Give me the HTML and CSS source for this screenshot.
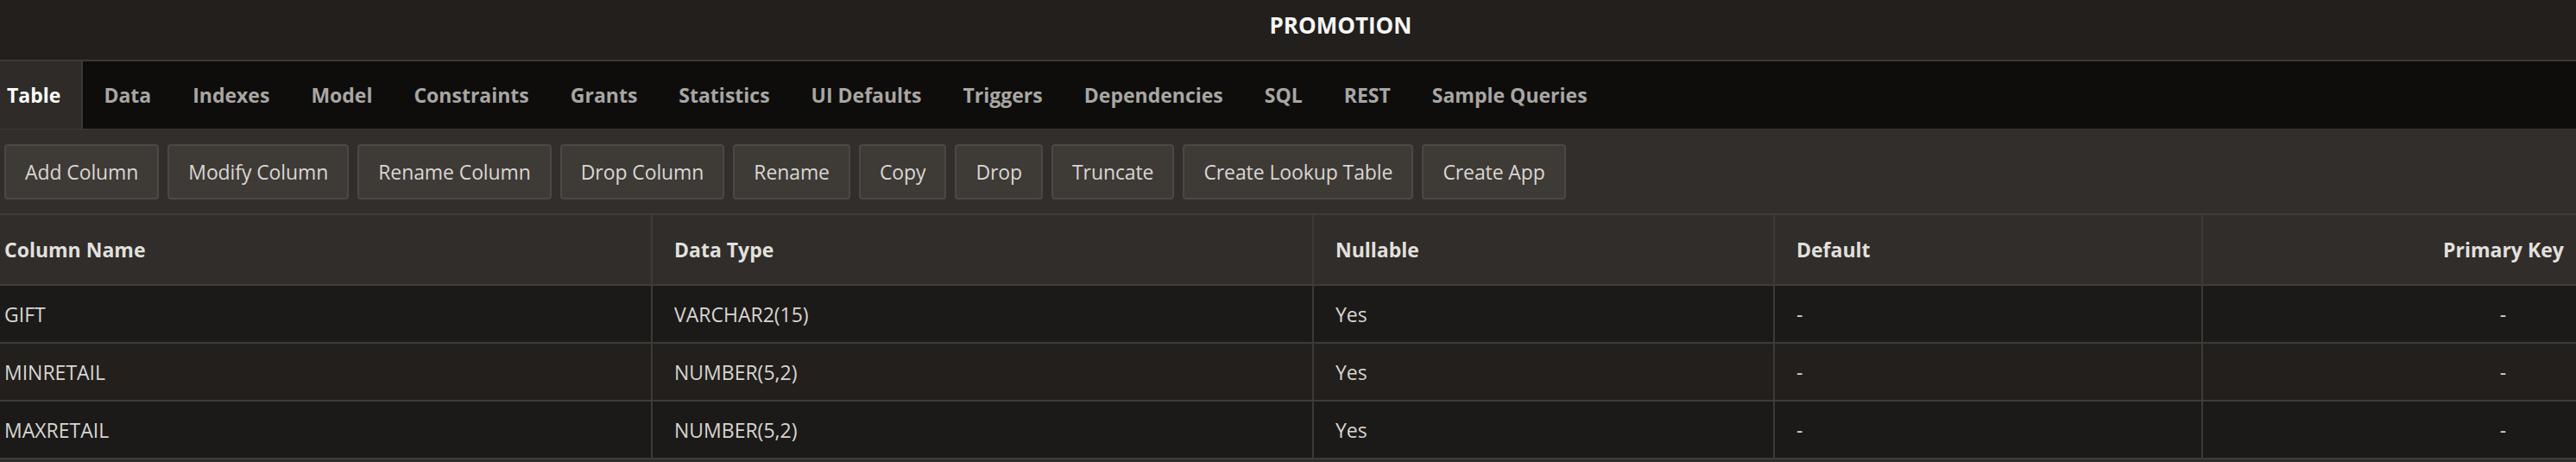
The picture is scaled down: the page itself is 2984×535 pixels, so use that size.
FILE: index.html
```html
<!DOCTYPE html>
<html lang="en">
<head>
<meta charset="utf-8">
<title>PROMOTION</title>
<link rel="stylesheet" href="styles.css">
</head>
<body>
<div class="page">
  <header class="title-bar">
    <h1 class="title">PROMOTION</h1>
  </header>
  <nav class="tabs">
    <span class="tab tab-active">Table</span>
    <span class="tab">Data</span>
    <span class="tab">Indexes</span>
    <span class="tab">Model</span>
    <span class="tab">Constraints</span>
    <span class="tab">Grants</span>
    <span class="tab">Statistics</span>
    <span class="tab">UI Defaults</span>
    <span class="tab">Triggers</span>
    <span class="tab">Dependencies</span>
    <span class="tab">SQL</span>
    <span class="tab">REST</span>
    <span class="tab">Sample Queries</span>
  </nav>
  <div class="toolbar">
    <button class="btn">Add Column</button>
    <button class="btn">Modify Column</button>
    <button class="btn">Rename Column</button>
    <button class="btn">Drop Column</button>
    <button class="btn">Rename</button>
    <button class="btn">Copy</button>
    <button class="btn">Drop</button>
    <button class="btn">Truncate</button>
    <button class="btn">Create Lookup Table</button>
    <button class="btn">Create App</button>
  </div>
  <table class="grid">
    <colgroup>
      <col class="c1"><col class="c2"><col class="c3"><col class="c4"><col class="c5">
    </colgroup>
    <thead>
      <tr>
        <th class="first">Column Name</th>
        <th>Data Type</th>
        <th>Nullable</th>
        <th>Default</th>
        <th class="pk"><span class="pk-inner">Primary Key</span></th>
      </tr>
    </thead>
    <tbody>
      <tr class="odd">
        <td class="first">GIFT</td><td>VARCHAR2(15)</td><td>Yes</td><td>-</td><td class="pk"><span class="pk-inner">-</span></td>
      </tr>
      <tr class="even">
        <td class="first">MINRETAIL</td><td>NUMBER(5,2)</td><td>Yes</td><td>-</td><td class="pk"><span class="pk-inner">-</span></td>
      </tr>
      <tr class="odd">
        <td class="first">MAXRETAIL</td><td>NUMBER(5,2)</td><td>Yes</td><td>-</td><td class="pk"><span class="pk-inner">-</span></td>
      </tr>
    </tbody>
  </table>
</div>
</body>
</html>
```
FILE: styles.css
```css
html, body {
  margin: 0;
  padding: 0;
}
body {
  background: #302d2a;
  font-family: "Open Sans", "Noto Sans", sans-serif;
  color: #d8d5d2;
}
.page {
  width: 2984px;
}
.title-bar {
  height: 71px;
  background: #221f1c;
  border-bottom: 2px solid #3c3936;
  display: flex;
  justify-content: center;
  padding-left: 122px;
  box-sizing: border-box;
}
.title {
  margin: 0;
  padding-top: 12px;
  font-size: 26px;
  line-height: 34px;
  font-weight: 700;
  color: #f7f6f5;
}
.tabs {
  height: 79px;
  box-sizing: border-box;
  background: #0e0d0c;
  display: flex;
  align-items: stretch;
  border-bottom: 1px solid #3c3936;
}
.tab {
  display: flex;
  align-items: center;
  padding: 0 24px;
  font-size: 23px;
  font-weight: 700;
  color: #a9a6a3;
}
.tab-active {
  padding-left: 8px;
  background: #2e2b28;
  border-right: 2px solid #3c3936;
  color: #ffffff;
}
.toolbar {
  height: 99px;
  box-sizing: border-box;
  background: #312e2b;
  display: flex;
  align-items: center;
  gap: 10px;
  padding: 0 5px;
  border-bottom: 2px solid #3f3c39;
}
.btn {
  height: 64px;
  padding: 0 22px;
  background: #3e3a36;
  border: 2px solid #4b4845;
  border-radius: 4px;
  font-family: "Open Sans", "Noto Sans", sans-serif;
  font-size: 23px;
  letter-spacing: -0.1px;
  color: #d9d6d3;
}
.grid {
  width: 2984px;
  border-collapse: collapse;
  table-layout: fixed;
}
.c1 { width: 755px; }
.c2 { width: 766px; }
.c3 { width: 534px; }
.c4 { width: 496px; }
.c5 { width: 433px; }
.grid th, .grid td {
  text-align: left;
  padding: 0 0 0 25px;
  border-left: 2px solid #3c3936;
  white-space: nowrap;
}
.grid th {
  height: 80px;
  background: #302d2a;
  font-size: 23px;
  font-weight: 700;
  color: #e2e0de;
  border-bottom: 2px solid #403d3a;
}
.grid td {
  height: 65px;
  font-size: 23px;
  color: #d8d5d2;
  border-bottom: 2px solid #3e3b38;
}
.grid .first {
  padding-left: 5px;
  border-left: none;
}
.grid .pk {
  text-align: right;
  padding: 0 15px 0 0;
}
.pk-inner {
  display: inline-block;
  width: 139px;
  text-align: center;
}
.odd td { background: #1c1a18; }
.even td { background: #221f1c; }
```
